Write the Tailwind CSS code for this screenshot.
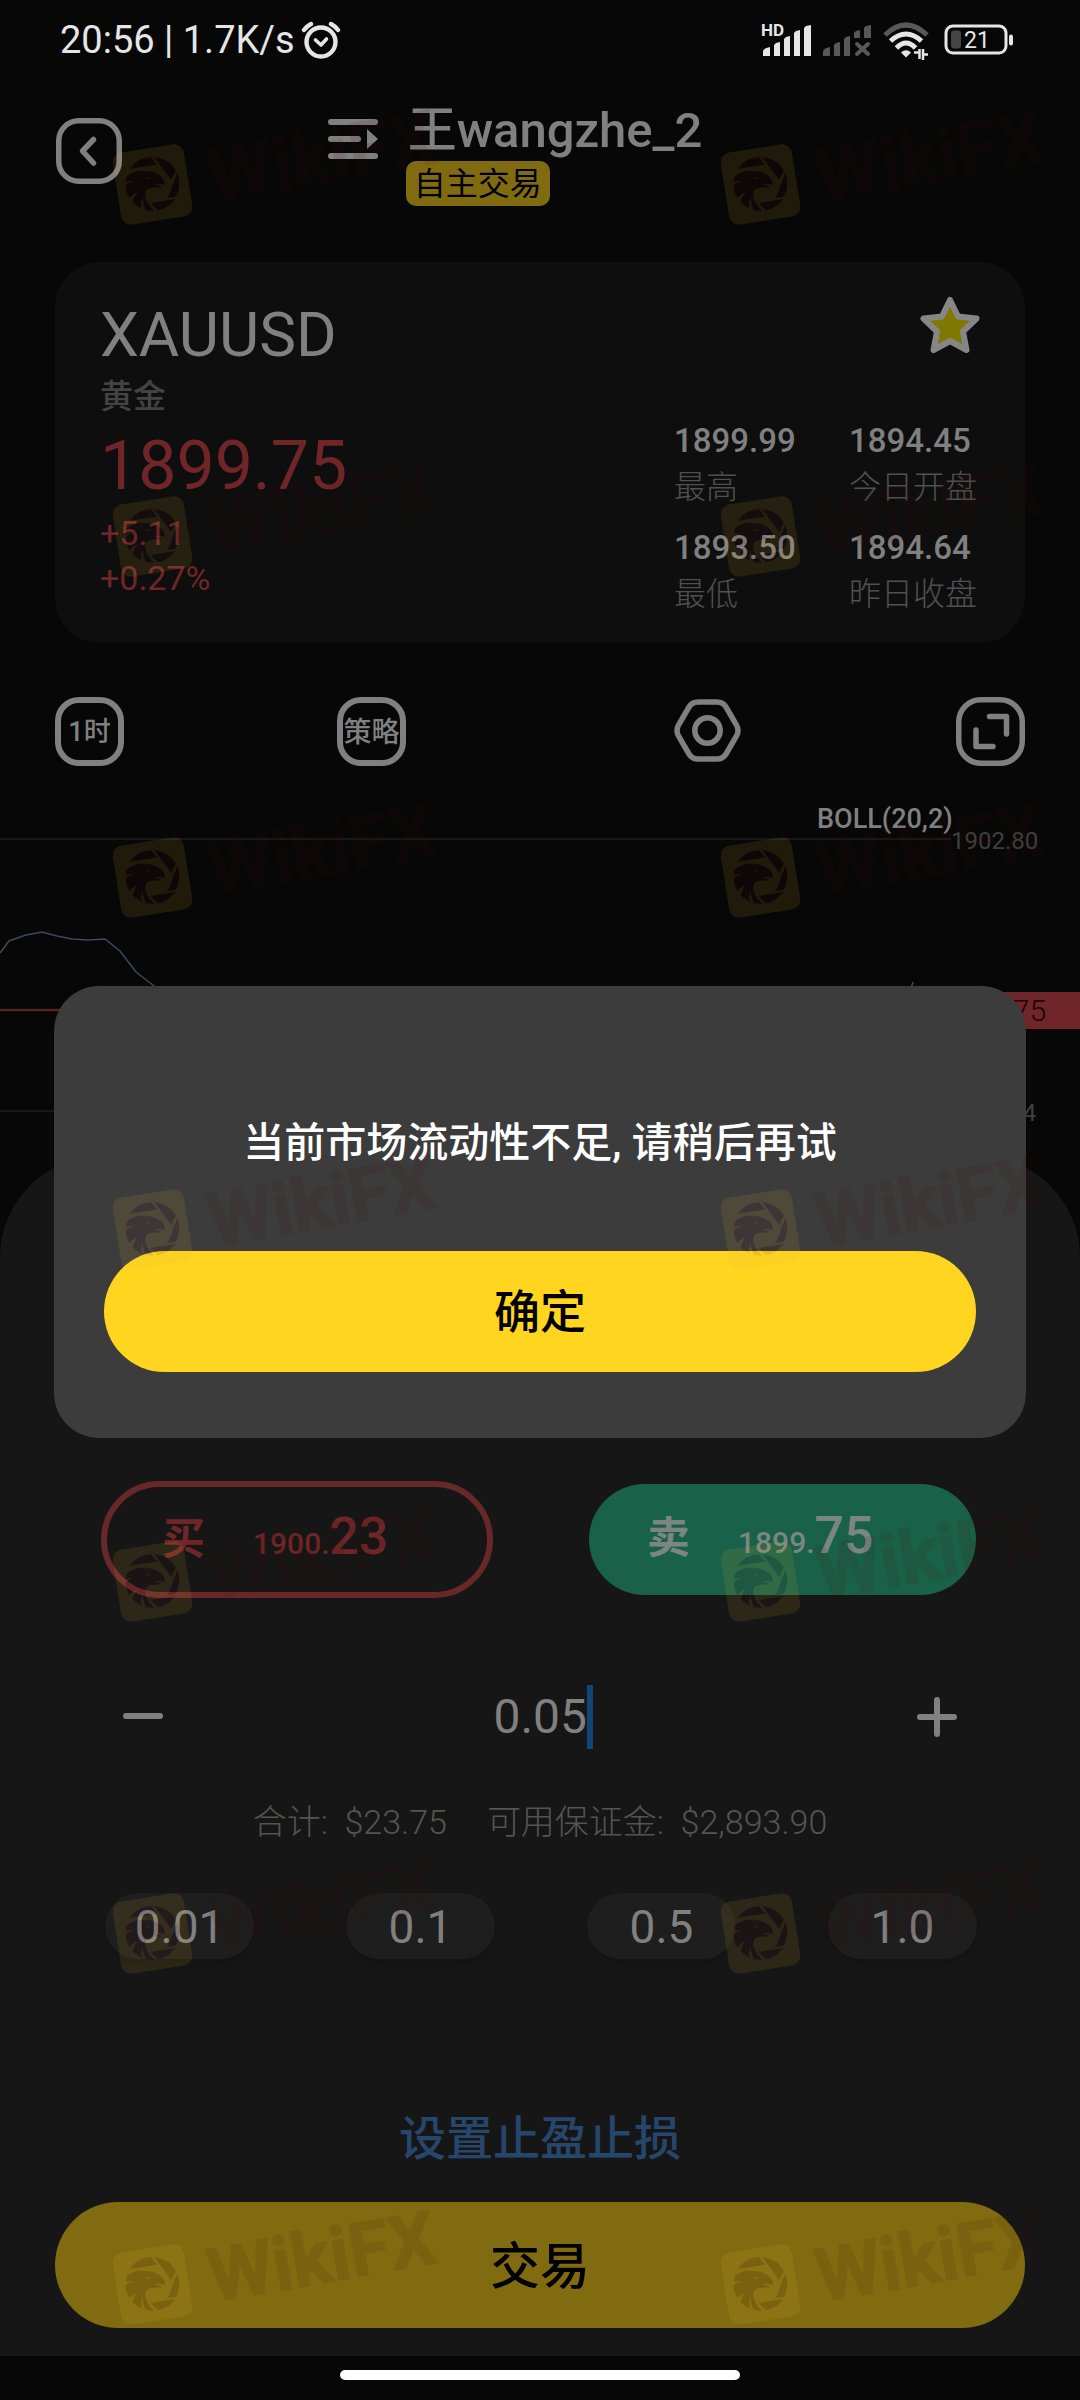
<!DOCTYPE html>
<html lang="zh-CN">

<head>
  <meta charset="UTF-8" />
  <meta name="viewport" content="width=device-width, initial-scale=1.0" />
  <title>XAUUSD | 交易</title>
  <script src="https://cdn.jsdelivr.net/npm/@tailwindcss/browser@4"></script>
</head>

<body class="bg-[#070707]">
  <div class="relative min-h-screen overflow-hidden bg-[#070707] text-[#808080] font-['Roboto','Noto_Sans_CJK_SC',sans-serif]">

    <!-- Status bar -->
    <div class="flex h-20 items-center justify-between pl-[60px] pr-[66px] text-[#e6e6e6]">
      <div class="flex items-center gap-[6px]">
        <span class="text-[38px] leading-10">20:56 | 1.7K/s</span>
        <svg class="h-10 w-10" viewBox="0 0 40 40" fill="none" stroke="currentColor" stroke-width="4.4" stroke-linecap="round" stroke-linejoin="round">
          <circle cx="20" cy="22" r="14.5" />
          <path d="M14.500 20l5.500 5 5.500-6" stroke-width="3.600" />
          <path d="M3 10Q6 6 10 4M37 10Q34 6 30 4" />
        </svg>
      </div>
      <div class="flex items-center gap-3">
        <svg class="h-10 w-[50px]" viewBox="0 0 50 40" fill="currentColor">
          <text x="0" y="16" font-size="17" font-weight="700">HD</text>
          <path d="M2 36v-5q1-3 7-4v9zM13 36V25l2-2 4-1v14zM23 36V19l2-2 4-1v20zM33 36V13l2-2 4-1v26zM43 36V8l2-2 5-1v31z" />
        </svg>
        <svg class="h-10 w-12" viewBox="0 0 48 40" fill="#585858">
          <path d="M0 36v-5q1-3 7-4v9zM11 36V25l2-2 4-1v14zM21 36V19l2-2 4-1v20zM31 18v-5l2-2 4-1v8zM41 18V8l2-2 5-1v13z" />
          <path d="M34 24l11 10M45 24L34 34" stroke="#585858" stroke-width="4" stroke-linecap="round" />
        </svg>
        <svg class="h-10 w-[49px]" viewBox="0 0 49 40" fill="none" stroke="currentColor" stroke-width="5">
          <path d="M2 15Q23-5 44 15" stroke="#585858" />
          <path d="M7.500 21Q23 7 38.500 21M13.500 28Q23 18 32.500 28" />
          <path d="M18 32.500q5-4.500 10 0l-5 5z" fill="currentColor" stroke="none" />
          <path d="M31 32.500h4.500M36.500 39V29M45 34.500h-4M40 29v11" stroke-width="2.500" />
        </svg>
        <svg class="h-10 w-[70px]" viewBox="0 0 70 40" fill="none" stroke="currentColor">
          <rect x="2" y="6" width="60" height="27" rx="7" stroke-width="3" />
          <rect x="7" y="10.500" width="10" height="18" rx="3" fill="#444" stroke="none" />
          <path d="M67 16.500v7" stroke-width="4" stroke-linecap="round" />
          <text x="20" y="28" font-size="23" fill="currentColor" stroke="none">21</text>
        </svg>
      </div>
    </div>

    <!-- Header -->
    <header class="relative flex h-[182px] justify-center pt-5">
      <button type="button" aria-label="返回" class="absolute left-14 top-[38px]">
        <svg class="h-[66px] w-[66px]" viewBox="0 0 66 66" fill="none" stroke="currentColor" stroke-width="5.500">
          <rect x="2.750" y="2.750" width="60.500" height="60.500" rx="20" />
          <path d="M37.500 21.500L26.500 33l11 12" stroke-linecap="round" stroke-linejoin="round" />
        </svg>
      </button>
      <div class="flex gap-7 pr-12">
        <button type="button" aria-label="切换账户" class="mt-[19px] h-10">
          <svg class="h-10 w-[50px]" viewBox="0 0 50 40" fill="currentColor">
            <rect y="0" width="50" height="6" rx="3" />
            <rect y="17" width="33" height="6" rx="3" />
            <rect y="34" width="50" height="6" rx="3" />
            <path d="M39 10v20l11-10z" />
          </svg>
        </button>
        <div class="flex flex-col items-start">
          <h1 class="px-[2px] text-[49px] font-medium leading-[61px]">王wangzhe_2</h1>
          <span class="rounded-[10px] bg-[#806b10] px-2 pt-[2px] text-[32px] leading-[43px] text-black">自主交易</span>
        </div>
      </div>
    </header>

    <!-- Quote card -->
    <section class="mx-[55px] flex justify-between rounded-[45px] bg-[#0e0e0e] pb-[25px] pl-[45px] pr-[44px] pt-[34px]">
      <div class="pt-[9px]">
        <h2 class="text-[62px] leading-[60px]">XAUUSD</h2>
        <p class="mt-[12px] text-[33px] font-medium leading-10 text-[#434343]">黄金</p>
        <p class="mt-[14px] text-[68px] leading-[70px] text-[#702628]">1899.75</p>
        <div class="mt-[10px] text-[34px] leading-[45px] text-[#6e2628]">
          <p>+5.11</p>
          <p>+0.27%</p>
        </div>
      </div>
      <div class="flex flex-col items-end">
        <button type="button" aria-label="收藏">
          <svg class="h-[60px] w-[62px]" viewBox="0 0 62 60">
            <path d="M31 4l8 16.500 18.500 2L44 35.500 47.500 54 31 45 14.500 54 18 35.500 4.500 22.500l18.500-2z" fill="#807800" stroke="#868686" stroke-width="6" stroke-linejoin="round" />
          </svg>
        </button>
        <dl class="mt-[61px] grid grid-cols-[175px_132px] gap-y-[13px]">
          <div class="flex flex-col-reverse">
            <dt class="text-[32px] font-light leading-[47px] text-[#505050]">最高</dt>
            <dd class="text-[33px] font-medium leading-[47px]">1899.99</dd>
          </div>
          <div class="flex flex-col-reverse">
            <dt class="text-[32px] font-light leading-[47px] text-[#505050]">今日开盘</dt>
            <dd class="text-[33px] font-medium leading-[47px]">1894.45</dd>
          </div>
          <div class="flex flex-col-reverse">
            <dt class="text-[32px] font-light leading-[47px] text-[#505050]">最低</dt>
            <dd class="text-[33px] font-medium leading-[47px]">1893.50</dd>
          </div>
          <div class="flex flex-col-reverse">
            <dt class="text-[32px] font-light leading-[47px] text-[#505050]">昨日收盘</dt>
            <dd class="text-[33px] font-medium leading-[47px]">1894.64</dd>
          </div>
        </dl>
      </div>
    </section>

    <!-- Chart tools -->
    <div class="mx-[55px] mt-[54px] grid grid-cols-2 gap-[268px]">
      <div class="flex justify-between">
        <button type="button" class="flex h-[69px] w-[69px] items-center justify-center whitespace-nowrap rounded-[24px] border-6 border-[#808080] pt-[2px] text-[27px] font-medium">1时</button>
        <button type="button" class="flex h-[69px] w-[69px] items-center justify-center whitespace-nowrap rounded-[24px] border-6 border-[#808080] pt-[2px] text-[28px] font-medium">策略</button>
      </div>
      <div class="flex justify-between">
        <button type="button" aria-label="指标设置">
          <svg class="h-[69px] w-[67px]" viewBox="0 0 67 69" fill="none" stroke="currentColor" stroke-width="5.500">
            <path d="M24 5h19q6 0 9 5l10.500 18q3 5.500 0 11L52 57q-3 5-9 5H24q-6 0-9-5L4.500 39q-3-5.500 0-11L15 10q3-5 9-5z" />
            <circle cx="33.500" cy="33.500" r="12.700" />
          </svg>
        </button>
        <button type="button" aria-label="全屏">
          <svg class="h-[69px] w-[69px]" viewBox="0 0 69 69" fill="none" stroke="currentColor" stroke-width="5.500">
            <rect x="2.750" y="2.750" width="63.500" height="63.500" rx="22" />
            <path d="M33.500 19.500h17V37M20 33v16.500h17" stroke-linecap="round" stroke-linejoin="round" />
          </svg>
        </button>
      </div>
    </div>

    <!-- Chart -->
    <svg class="block h-[391px] w-full" viewBox="0 0 1080 391" fill="none">
      <path d="M0 73H951M0 345H951" stroke="#181818" stroke-width="2" />
      <path d="M0 187L9 175 26 169 42 166 57 170 72 173 88 174 105 173 120 185 136 206 154 220 180 240M908 232L913 216" stroke="#3a4a5c" stroke-width="1.500" />
      <path d="M0 244H940" stroke="#5a2324" stroke-width="2.500" />
      <rect x="930" y="226" width="150" height="37" fill="#702628" />
      <text x="817" y="62" font-size="27" font-weight="500" fill="#808080">BOLL(20,2)</text>
      <text x="951" y="83" font-size="24" fill="#404040">1902.80</text>
      <text x="949" y="355" font-size="24" fill="#404040">1897.64</text>
      <text x="939" y="255" font-size="30" font-weight="300" fill="#180404">1899.75</text>
    </svg>

    <!-- Order panel -->
    <form class="rounded-t-[100px] bg-[#161616] pb-7 pt-[324px]">
      <div class="flex items-center justify-between pl-[101px] pr-[104px]">
        <button type="button" class="flex h-[117px] w-[392px] items-baseline rounded-full border-6 border-[#68282a] pl-[55px] text-[#702628]">
          <span class="text-[43px] font-bold leading-[105px]">买</span>
          <span class="ml-12 text-[30px] font-medium">1900.</span>
          <span class="text-[52px] font-medium leading-[100px]">23</span>
        </button>
        <button type="button" class="flex h-[111px] w-[387px] items-baseline rounded-full bg-[#1a614a] pl-[58px] text-[#7b8682]">
          <span class="text-[43px] font-bold leading-[109px]">卖</span>
          <span class="ml-12 text-[30px] font-medium">1899.</span>
          <span class="text-[52px] font-medium leading-[100px]">75</span>
        </button>
      </div>

      <div class="mt-[86px] flex h-[66px] items-center justify-between px-[123px]">
        <button type="button" aria-label="减少">
          <svg class="h-10 w-10" viewBox="0 0 40 40" fill="currentColor"><rect y="16" width="40" height="6" rx="3" /></svg>
        </button>
        <div class="flex items-center">
          <label for="lots" class="sr-only">手数</label>
          <input id="lots" type="text" value="0.05" class="w-[100px] bg-transparent text-right text-[48px] leading-[60px] outline-none" />
          <span class="h-16 w-[6px] bg-[#104578]"></span>
        </div>
        <button type="button" aria-label="增加">
          <svg class="h-10 w-10" viewBox="0 0 40 40" fill="currentColor">
            <rect y="17" width="40" height="6" rx="3" />
            <rect x="17" width="6" height="40" rx="3" />
          </svg>
        </button>
      </div>

      <p class="mt-[52px] flex justify-center gap-10 text-[34px] font-light leading-10 text-[#545454]">
        <span>合计:&nbsp; $23.75</span>
        <span>可用保证金:&nbsp; $2,893.90</span>
      </p>

      <div class="mt-[51px] flex justify-between pl-[105px] pr-[103px] text-[46px]">
        <button type="button" class="h-[66px] w-[149px] rounded-full bg-[#1e1e1e] shadow-md">0.01</button>
        <button type="button" class="h-[66px] w-[149px] rounded-full bg-[#1e1e1e] shadow-md">0.1</button>
        <button type="button" class="h-[66px] w-[149px] rounded-full bg-[#1e1e1e] shadow-md">0.5</button>
        <button type="button" class="h-[66px] w-[149px] rounded-full bg-[#1e1e1e] shadow-md">1.0</button>
      </div>

      <div class="mt-[150px] text-center text-[47px] font-medium leading-[60px] text-[#27466c]">
        <a href="#">设置止盈止损</a>
      </div>

      <div class="mt-[33px] px-[55px]">
        <button type="submit" class="h-[126px] w-full rounded-full bg-[#806b10] pt-1 text-[50px] font-medium text-black">交易</button>
      </div>
    </form>

    <!-- Gesture bar -->
    <div class="flex h-11 justify-center pt-[14px]">
      <div class="h-[10px] w-[400px] rounded-full bg-white"></div>
    </div>

    <!-- Dialog -->
    <div class="absolute inset-0 flex items-center px-[54px] pt-6">
      <div role="alertdialog" aria-labelledby="dialog-text" class="w-full rounded-[45px] bg-[#3c3c3c] px-[50px] pb-[66px] pt-[127px] text-center">
        <p id="dialog-text" class="text-[41px] font-medium leading-[60px] text-white">当前市场流动性不足, 请稍后再试</p>
        <button type="button" class="mt-[78px] h-[121px] w-full rounded-full bg-[#ffd520] pt-[2px] text-[46px] font-medium text-black">确定</button>
      </div>
    </div>

    <!-- Watermark -->
    <svg class="pointer-events-none absolute inset-0 w-full" viewBox="0 0 1080 2400" aria-hidden="true">
      <defs>
        <g id="mark">
          <g transform="rotate(-9 40.500 40.500)">
            <rect x="4.500" y="4" width="72" height="73" rx="10" fill="#eab432" />
          </g>
          <g transform="translate(40.500 40) scale(.3333)" fill="#461810">
            <path d="M-68-46L14-58-4-81A81 81 0 0 0-68-46Z" />
            <path d="M5-81A81 81 0 0 1 70-40L56-12Z" />
            <path d="M74-33A81 81 0 0 1 70 38L46 42Z" />
            <path d="M68 45A81 81 0 0 1 16 79L-6 57Z" />
            <path d="M-78-22C-60-38-40-42-25-38C0-38 10-34 18-28C32-22 38-8 37 4C28-2 18 0 8-1C14 4 26 6 30 10C10 12-18 8-22 28C-24 45-12 62 4 80A81 81 0 0 1-20 78C-28 62-30 50-28 42C-36 54-36 64-30 75A81 81 0 0 1-60 54C-56 40-50 30-44 24C-58 30-66 40-70 42A81 81 0 0 1-81 5C-74-4-66-6-58-9C-68-10-76-8-80-4Z" />
            <path d="M-24-20Q-14-12-4-20Q-14-18-24-20Z" fill="#eab432" />
          </g>
          <text transform="translate(101 58) rotate(-10)" font-size="74" font-weight="600" fill="#461810" stroke="#461810" stroke-width="2" stroke-linejoin="round">WikiFX</text>
        </g>
        <g id="mark-row" opacity=".11">
          <use href="#mark" x="112" />
          <use href="#mark" x="720" />
        </g>
      </defs>
      <use href="#mark-row" y="144" />
      <use href="#mark-row" y="496" />
      <use href="#mark-row" y="837" />
      <use href="#mark-row" y="1189" />
      <use href="#mark-row" y="1541" />
      <use href="#mark-row" y="1893" />
      <use href="#mark-row" y="2244" />
    </svg>
  </div>
</body>

</html>
